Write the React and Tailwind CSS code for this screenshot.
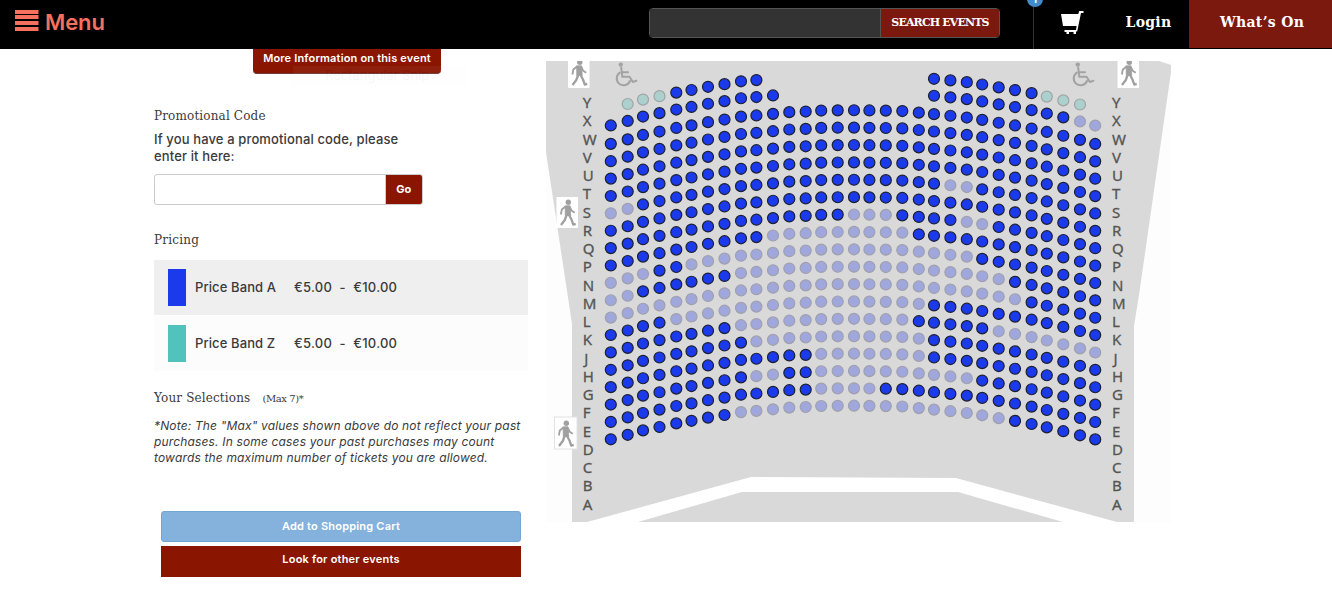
const SANS = "font-['Inter','Open_Sans',sans-serif]";
const SLAB = "font-['DejaVu_Serif','Liberation_Serif',serif]";

const COLS = [610.8, 627.7, 643, 659.5, 676.3, 691.5, 708, 724.5, 741, 756.4, 773, 789.3, 805.7, 821.2, 837.7, 854, 869.4, 885.8, 902.3, 918.8, 934, 950.4, 966.8, 982.2, 998.7, 1015, 1031.6, 1046.8, 1063.3, 1080, 1095.2];
const BASE = [439.3, 434.8, 430.4, 427, 423.4, 420.8, 417.6, 415, 412.1, 410.9, 409.3, 407.6, 407, 406, 405.8, 405.7, 405.9, 406.1, 406.5, 408.1, 409.6, 411.2, 413, 415.3, 418.2, 420.9, 424, 427.4, 431.2, 435.3, 439.4];

// b: free, s: sold, z: price band Z, dot: no seat
const SEATS = [
  ".zzzbbbbbb..........bbbbbbbzzz.",
  "bbbbbbbbbbb.........bbbbbbbbbss",
  "bbbbbbbbbbbbbbbbbbbbbbbbbbbbbbb",
  "bbbbbbbbbbbbbbbbbbbbbbbbbbbbbbb",
  "bbbbbbbbbbbbbbbbbbbbbbbbbbbbbbb",
  "bbbbbbbbbbbbbbbbbbbbbbbbbbbbbbb",
  "ssbbbbbbbbbbbbbbbbbbbssbbbbbbbb",
  "bbbbbbbbbbbbbbbbbbbbbbbbbbbbbbb",
  "bbbbbbbbbbbbbbbsssbbbbssbbbbbbb",
  "bbbbbbbbbbsssssssssbbbbbbbbbbbb",
  "sssbbssssssssssssssssssbbbbbbbb",
  "ssbbbbbbsssssssssssssssssbbbbbb",
  "ssssssssssssssssssssssssssbbbbb",
  "bbbbssssssssssssssssbbbbbbbbbbb",
  "bbbbbbbbsssssssssssbbbbbsssssss",
  "bbbbbbbbbsssssssssssbbbbbbbbbbb",
  "bbbbbbbbbbbbbsssssssbbbbbbbbbbb",
  "bbbbbbbbbssbbssssssssssbbbbbbbb",
  "bbbbbbbbbbbbbssssbbbbbbbbbbbbbb",
  "bbbbbbbbsssssssssssssssssbbbbbb",
];
const FILL = { b: "#1b3aec", s: "#9fa7dd", z: "#abd0ce" };
const STROKE = { b: "#1d2030", s: "#a0a0ad", z: "#9fa5a5" };
// The two top rows sit slightly above the regular row pitch.
const LIFT = [-0.6, -1];
const LETTERS = "YXWVUTSRQPNMLKJHGFEDCBA".split("");

function Walker({ x, y, h = 31, w = 23 }) {
  return (
    <g>
      <rect x={x} y={y} width={w} height={h} fill="#fff" />
      <g transform={`translate(${x} ${y + h - 31})`} fill="none" stroke="#a0a0a0" strokeLinejoin="round">
        <circle cx="11.8" cy="5.2" r="2.7" fill="#a0a0a0" stroke="none" />
        <path d="M8.6 8.800H13.600L14.200 18.500H8.800Z" fill="#a0a0a0" strokeWidth="0.8" />
        <path d="M9 9.500L5.300 12.500L4.400 17.500" strokeWidth="1.8" />
        <path d="M13.500 10L15.200 13.800L18.200 15.800" strokeWidth="1.8" />
        <path d="M10.300 17.500L8.300 23L4.500 28" strokeWidth="2.3" />
        <path d="M12.300 17.500L15 22.500L16.800 27.600L19.200 26.800" strokeWidth="2.3" />
      </g>
    </g>
  );
}

function Wheelchair({ x }) {
  return (
    <g transform={`translate(${x} 62)`} fill="none" stroke="#a3a3a3" strokeWidth="2" strokeLinecap="round" strokeLinejoin="round">
      <circle cx="6.8" cy="2.6" r="2.2" fill="#a3a3a3" stroke="none" />
      <path d="M7.2 5.500L8.300 14.800H15.600L18.800 20L22.400 18.800" />
      <path d="M8 10.200H14" />
      <path d="M5.800 10.600A6.900 6.900 0 1 0 16 19" />
    </g>
  );
}

function SeatMap() {
  return (
    <svg width="626" height="461" viewBox="546 61 626 461" className="block">
      <rect x="546" y="61" width="625" height="461" fill="#fdfdfd" />
      <path d="M546 61H1159L1171 65V72L1139 295L1134 326V522H572V324L546 152Z" fill="#d9d9d9" />
      <path d="M587 522L751 477L956 478L1117 522H1063L958 492H742L638 522Z" fill="#fff" />
      <Walker x={568} y={61} h={27} w={21.5} />
      <Walker x={1117.5} y={61} h={27} w={21.5} />
      <Walker x={556.5} y={197} w={21.5} />
      <Walker x={554.5} y={417} w={22.5} h={32} />
      <rect x="554.5" y="417" width="22.5" height="32" fill="none" stroke="#e2e2e2" />
      <Wheelchair x={614} />
      <Wheelchair x={1071} />
      {[582.8, 1112.1].map((x) => (
        <g key={x} fill="#555" stroke="#555" strokeWidth="0.3" className="font-['Noto_Sans','Open_Sans',sans-serif] text-[15px]">
          {LETTERS.map((l, i) => (
            <text key={l} x={l === "J" ? x + 1.5 : x} y={108.2 + i * 18.25}>{l}</text>
          ))}
        </g>
      ))}
      {SEATS.map((row, r) =>
        row.split("").map((s, c) =>
          s === "." ? null : (
            <circle key={`${r}-${c}`} cx={COLS[c]} cy={BASE[c] - (19 - r) * 17.38 + (LIFT[r] ?? 0)} r="5.5" fill={FILL[s]} stroke={STROKE[s]} strokeWidth="1.2" />
          )
        )
      )}
    </svg>
  );
}

function Header() {
  return (
    <header className="flex h-[49px] bg-black text-white">
      <div className="flex w-[649px] items-start pl-[15px] pt-2.5 text-[#f4705f]">
        <svg width="24" height="21" viewBox="0 0 24 21" fill="#f4705f">
          <path d="M0 0H23.500V4H0ZM0 5H23.500V9H0ZM0 11H23.500V15H0ZM0 17H23.500V21H0Z" />
        </svg>
        <span className={`${SANS} ml-[6px] text-[22px] leading-6 font-semibold tracking-[-0.1px]`}>Menu</span>
      </div>
      <div className="mt-2 flex h-[30px] w-[351px] overflow-hidden rounded border border-[#555]">
        <div className="flex-1 bg-[#333]" />
        <button className={`${SLAB} w-[119px] border-l border-[#555] bg-[#7b190e] text-[11px] font-bold tracking-[-0.85px] whitespace-nowrap`}>SEARCH EVENTS</button>
      </div>
      <div className="relative ml-[33px] flex w-[156px] border-l border-[#333]">
        <span className={`${SANS} absolute -top-[9px] -left-[7px] flex h-4 w-4 items-center justify-center rounded-full bg-[#428bca] text-[10px] font-bold`}>1</span>
        <svg width="24" height="26" viewBox="0 0 24 26" className="mt-[10px] ml-[26px]" fill="#fff">
          <path d="M1 4H18.300L19.200 1H23.500V3H21L17.200 21.500H16V24H13.500V22H9V24H6.500V22H4.500V20H16L16.600 16H3Z" />
        </svg>
        <span className={`${SLAB} ml-[41.5px] text-[14px] leading-[45px] font-bold tracking-[0.3px]`}>Login</span>
      </div>
      <div className={`${SLAB} h-12 flex-1 bg-[#7b190e] pl-[31px] text-[14px] leading-[45px] font-bold tracking-[0.3px] whitespace-nowrap`}>What’s On</div>
    </header>
  );
}

function Price({ label, range, swatch, row }) {
  return (
    <div className={`flex h-[55px] items-center pl-3.5 ${row}`}>
      <div className={`h-[37px] w-[18px] ${swatch}`} />
      <span className="ml-[9px] w-[99px] text-[13px] font-medium tracking-[0.1px]">{label}</span>
      <span className="text-[13px] font-medium tracking-[0.25px] whitespace-pre">{range}</span>
    </div>
  );
}

export default function App() {
  return (
    <div className={`${SANS} h-[590px] w-[1332px] overflow-hidden bg-white text-[#3a3a3a]`}>
      <Header />
      <div className="flex">
        <main className="relative w-[546px] pl-[154px]">
          <button className="ml-[99px] flex h-[25px] w-[188px] items-start justify-center rounded-b border-b border-[#6d3b35] bg-[#8a1602] text-[11px] leading-[19px] font-semibold tracking-[0.17px] whitespace-nowrap text-white">More Information on this event</button>
          <div className="absolute top-[17px] left-[293px] flex h-5 w-[173px] items-center bg-[#e8f4f8] pl-8 text-[13px] whitespace-nowrap text-[#333] opacity-[0.04]">Rectangular Snip</div>
          <h2 className={`${SLAB} mt-[33px] text-[12px] leading-[18px] tracking-[0.15px]`}>Promotional Code</h2>
          <p className="mt-[6px] text-[13px] leading-[17px] font-medium tracking-[0.13px]">If you have a promotional code, please<br />enter it here:</p>
          <div className="mt-[9px] flex h-[31px] w-[268.5px] overflow-hidden rounded-[3px] border border-[#ccc]">
            <div className="w-[231px] border-r border-[#ccc]" />
            <button className="flex-1 bg-[#8a1602] text-[11px] font-bold text-white">Go</button>
          </div>
          <h2 className={`${SLAB} mt-[26px] text-[12px] leading-[18px] tracking-[0.2px]`}>Pricing</h2>
          <div className="mt-[11px] flex w-[374px] flex-col">
            <Price label="Price Band A" range="€5.00  -  €10.00" swatch="bg-[#1b3aec]" row="bg-[#efefef]" />
            <Price label="Price Band Z" range="€5.00  -  €10.00" swatch="bg-[#52c2bd]" row="mt-px bg-[#fcfcfc]" />
          </div>
          <h2 className={`${SLAB} mt-[18px] text-[12px] leading-[18px] tracking-[0.15px]`}>Your Selections<span className="ml-3 text-[10px] tracking-[-0.4px]">(Max 7)*</span></h2>
          <p className="mt-[10px] text-[12px] leading-4 tracking-[0.16px] whitespace-nowrap italic">*Note: The "Max" values shown above do not reflect your past<br />purchases. In some cases your past purchases may count<br />towards the maximum number of tickets you are allowed.</p>
          <div className="mt-[45px] ml-[7px] flex w-[360px] flex-col gap-1 text-[11px] font-semibold tracking-[0.2px] text-white">
            <button className="h-[31px] rounded-[3px] border border-[#74a6d2] bg-[#85b2dc]">Add to Shopping Cart</button>
            <button className="h-[31px] bg-[#8a1602] pb-1">Look for other events</button>
          </div>
        </main>
        <div className="pt-3"><SeatMap /></div>
      </div>
    </div>
  );
}
